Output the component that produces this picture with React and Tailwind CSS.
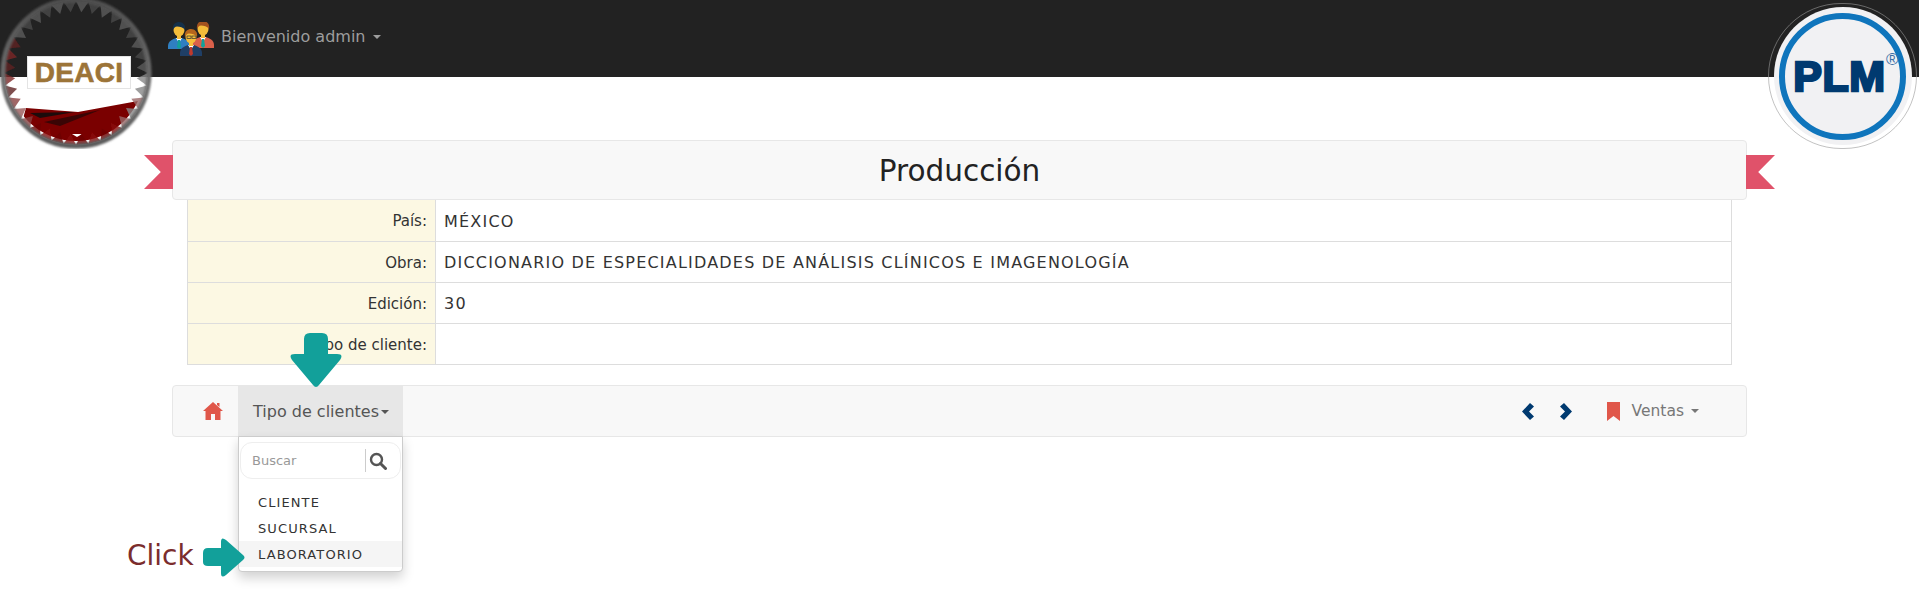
import React from 'react';

const rows = [
  { label: 'País:', value: 'MÉXICO' },
  { label: 'Obra:', value: 'DICCIONARIO DE ESPECIALIDADES DE ANÁLISIS CLÍNICOS E IMAGENOLOGÍA' },
  { label: 'Edición:', value: '30' },
  { label: 'Tipo de cliente:', value: '' },
];

// triangles of the DEACI ring, coloured by where they sit on the circle
const ringTeeth = (cx, cy, rOut, rIn, n) => {
  const teeth = [];
  for (let i = 0; i < n; i++) {
    const a0 = (i * 2 * Math.PI) / n;
    const a1 = ((i + 1) * 2 * Math.PI) / n;
    const mid = (a0 + a1) / 2;
    const deg = (mid * 180) / Math.PI;
    let fill = i % 2 ? '#5c5c5c' : '#4a4a4a';
    if (deg > 50 && deg < 130) fill = i % 2 ? '#8a0a0a' : '#6e0606';
    else if (deg >= 130 && deg < 160) fill = i % 2 ? '#8a4040' : '#9a5a5a';
    else if (deg >= 160 && deg < 215) fill = i % 2 ? '#7d2828' : '#5e2020';
    else if (deg >= 15 && deg <= 50) fill = i % 2 ? '#888' : '#9a6a6a';
    else if (deg < 15) fill = '#888';
    const p = (r, a) => `${(cx + r * Math.cos(a)).toFixed(1)},${(cy + r * Math.sin(a)).toFixed(1)}`;
    teeth.push({ key: i, fill, points: `${p(rOut, a0)} ${p(rIn, mid)} ${p(rOut, a1)}` });
  }
  return teeth;
};

const Caret = ({ className }) => (
  <span className={`inline-block w-0 h-0 border-x-[4px] border-x-transparent border-t-[4px] ${className}`} />
);

const DeaciLogo = () => (
  <div className="absolute left-0 top-0 w-[154px] h-[149px]">
    <svg viewBox="0 0 154 149" className="absolute inset-0 w-full h-full">
      <defs>
        <linearGradient id="ringFade" x1="0" y1="0" x2="0" y2="1">
          <stop offset="0" stopColor="#4f4f4f" />
          <stop offset="0.6" stopColor="#707070" />
          <stop offset="1" stopColor="#5a5a5a" />
        </linearGradient>
        <clipPath id="bandClip">
          <circle cx="76" cy="73" r="68" />
        </clipPath>
        <filter id="soft">
          <feGaussianBlur stdDeviation="1" />
        </filter>
        <filter id="softer">
          <feGaussianBlur stdDeviation="0.4" />
        </filter>
      </defs>
      <g clipPath="url(#bandClip)">
        <path d="M26 108 L78 112 L138 101 L140 150 L14 150 Z" fill="#7a0000" />
        <path d="M30 113 L75 112 L40 118 Z" fill="#1c0b0b" />
        <path d="M44 122 L100 110 L60 126 Z" fill="#3a0505" />
        <path d="M72 134 L82 134 L77 137 Z" fill="#fff" />
      </g>
      <g opacity="0.8" filter="url(#softer)">
        {ringTeeth(76, 73, 72, 61, 36).map((t) => (
          <polygon key={t.key} points={t.points} fill={t.fill} />
        ))}
      </g>
      <circle cx="76" cy="73" r="73" fill="none" stroke="url(#ringFade)" strokeWidth="5" filter="url(#soft)" />
    </svg>
    <div className="absolute left-[27px] top-[56px] w-[104px] h-[33px] bg-white border border-[#e4e4e4] flex items-center justify-center">
      <span className="font-['Liberation_Sans',sans-serif] font-bold text-[28px] leading-none tracking-[0.3px] text-[#9c7438] [-webkit-text-stroke:0.6px_#9c7438]">DEACI</span>
    </div>
  </div>
);

const PlmLogo = () => (
  <div className="absolute right-[2px] top-[3px] w-[149px] h-[146px] rounded-full border border-[#9a9a9a]/60 flex items-center justify-center">
    <div className="w-[138px] h-[138px] rounded-full bg-[#f1f1f3] flex items-center justify-center">
      <div className="w-[127px] h-[127px] rounded-full border-[6px] border-[#0f75bc] flex items-center justify-center">
        <span className="relative mr-[6px] font-['Liberation_Sans',sans-serif] font-bold text-[43px] leading-none tracking-[0.5px] text-[#003a70] [-webkit-text-stroke:2.5px_#003a70]">
          PLM
          <span className="absolute -right-[13px] -top-[4px] text-[17px] font-normal tracking-normal [-webkit-text-stroke:0] text-[#3a6ea5]">®</span>
        </span>
      </div>
    </div>
  </div>
);

const Person = ({ x, y, skin, hair, suit, tie }) => (
  <g transform={`translate(${x} ${y})`}>
    <path d="M0 24 C0 19 5 17 8 16 H14 C17 17 22 19 22 24 V27 H0 Z" fill={suit} />
    <path d="M8 16 L11 21 L14 16 Z" fill="#fff" />
    <path d="M10 18 H12 L13 25 L11 27 L9 25 Z" fill={tie} />
    <rect x="9" y="11" width="4" height="6" fill={skin} />
    <ellipse cx="11" cy="8" rx="5.500" ry="6.500" fill={skin} />
    <path d="M5 8 C4 2 8 0 11 0 C15 0 18 3 17 8 C15 5 12 4.500 9 4.500 C7 4.500 6 6 5 8 Z" fill={hair} />
  </g>
);

const PeopleIcon = () => (
  <svg viewBox="0 0 47 34" className="w-[47px] h-[34px] shrink-0">
    <Person x="0" y="0" skin="#f5bd3a" hair="#14304a" suit="#2f7fc1" tie="#12a09a" />
    <Person x="24" y="-1" skin="#f5bd3a" hair="#a2521f" suit="#d9604a" tie="#12a09a" />
    <Person x="12" y="7" skin="#f5bd3a" hair="#b5651d" suit="#1f3f66" tie="#c0392b" />
    <rect x="19" y="14" width="4" height="2.500" fill="none" stroke="#333" strokeWidth="0.7" />
    <rect x="24" y="14" width="4" height="2.500" fill="none" stroke="#333" strokeWidth="0.7" />
  </svg>
);

const DownArrow = () => (
  <svg viewBox="0 0 52 55" className="absolute left-[290px] top-[333px] w-[52px] h-[55px]">
    <path d="M20 0 H32 Q38 0 38 6 V21 H47 Q54 21 50 27 L29 52 Q26 56 23 52 L2 27 Q-2 21 5 21 H14 V6 Q14 0 20 0 Z" fill="#12a09a" />
  </svg>
);

const RightArrow = () => (
  <svg viewBox="0 0 42 39" className="absolute left-[203px] top-[538px] w-[42px] h-[39px]">
    <path d="M0 15 Q0 10 5 10 H18 V4 Q18 -2 23 2 L40 17 Q43 19.500 40 22 L23 37 Q18 41 18 35 V28 H5 Q0 28 0 24 Z" fill="#12a09a" />
  </svg>
);

const ribbon = 'w-[29px] h-[34px] bg-[#e0526a] shrink-0';

const App = () => {
  return (
    <div className="relative h-[593px] bg-white overflow-hidden font-['DejaVu_Sans',sans-serif] text-[#333]">
      {/* Navbar */}
      <div className="h-[77px] bg-[#222] flex items-start pl-[168px] pt-[22px] gap-[6px]">
        <PeopleIcon />
        <span className="text-[#9d9d9d] text-[16px] leading-[30px]">Bienvenido admin</span>
        <Caret className="border-t-[#9d9d9d] mt-[13px] ml-[2px]" />
      </div>

      <div className="w-[1575px] ml-[172px]">
        {/* Title */}
        <div className="relative mt-[63px] h-[60px] pt-[3px] bg-[#f8f8f8] border border-[#e7e7e7] rounded flex items-center justify-center">
          <div className={`absolute -left-[29px] top-[14px] ${ribbon} [clip-path:polygon(0_0,100%_0,100%_100%,0_100%,58%_50%)]`} />
          <div className={`absolute -right-[29px] top-[14px] ${ribbon} [clip-path:polygon(0_0,100%_0,42%_50%,100%_100%,0_100%)]`} />
          <h1 className="text-[29.5px] text-[#222] leading-none">Producción</h1>
        </div>

        {/* Info table */}
        <div className="mx-[15px] border border-[#ddd] border-t-0">
          {rows.map((r) => (
            <div key={r.label} className="flex h-[41px] border-t border-[#ddd] first:border-t-0">
              <div className="w-[248px] shrink-0 bg-[#fcf8e3] border-r border-[#ddd] flex items-center justify-end pr-[8px] pt-[2px] text-[15px]">{r.label}</div>
              <div className="flex-1 flex items-center pl-[8px] pt-[2px] text-[16px] tracking-[1.2px]">{r.value}</div>
            </div>
          ))}
        </div>

        {/* Toolbar */}
        <div className="mt-[20px] h-[52px] bg-[#f8f8f8] border border-[#e7e7e7] rounded flex items-stretch">
          <div className="w-[65px] flex items-center justify-center pl-[15px]">
            <svg viewBox="0 0 20 18" className="w-[20px] h-[18px]">
              <path d="M10 0 L20 9 L17.500 9 V18 H12 V12 H8 V18 H2.500 V9 H0 Z M14 1 H16.500 V5 L14 3 Z" fill="#e0574a" />
            </svg>
          </div>
          <div className="w-[165px] bg-[#e7e7e7] flex items-center pl-[15px] pt-[2px] text-[#555] text-[16px]">
            Tipo de clientes
            <Caret className="border-t-[#555] ml-[2px]" />
          </div>
          <div className="ml-auto flex items-center pr-[47px]">
            <svg viewBox="0 0 12 17" className="w-[12px] h-[17px]">
              <path d="M8 0 L12 3.500 L7 8.500 L12 13.500 L8 17 L0 8.500 Z" fill="#003a70" />
            </svg>
            <svg viewBox="0 0 12 17" className="w-[12px] h-[17px] ml-[26px]">
              <path d="M4 0 L0 3.500 L5 8.500 L0 13.500 L4 17 L12 8.500 Z" fill="#003a70" />
            </svg>
            <svg viewBox="0 0 13 19" className="w-[13px] h-[19px] ml-[35px]">
              <path d="M0 0 H13 V19 L6.500 14 L0 19 Z" fill="#e0574a" />
            </svg>
            <span className="ml-[12px] pt-[2px] text-[#777] text-[15.5px]">Ventas</span>
            <Caret className="border-t-[#777] ml-[7px]" />
          </div>
        </div>
      </div>

      {/* Dropdown */}
      <div className="absolute left-[238px] top-[436px] w-[165px] h-[136px] bg-white border border-[#ccc] rounded-b shadow-[0_6px_12px_rgba(0,0,0,0.18)]">
        <div className="mx-[1px] mt-[5px] h-[37px] border border-[#eee] rounded-[12px] flex items-center pl-[11px]">
          <span className="w-[113px] text-[13px] text-[#999]">Buscar</span>
          <div className="h-[23px] w-px bg-[#ccc]" />
          <svg viewBox="0 0 18 18" className="w-[18px] h-[18px] ml-[3px]">
            <circle cx="7.500" cy="7.500" r="5.500" fill="none" stroke="#555" strokeWidth="2.400" />
            <path d="M11.500 11.500 L16.500 16.500" stroke="#555" strokeWidth="3" strokeLinecap="round" />
          </svg>
        </div>
        <ul className="mt-[10px] text-[13px] tracking-[1.1px] text-[#333]">
          <li className="h-[26px] pl-[19px] pt-[2px] flex items-center">CLIENTE</li>
          <li className="h-[26px] pl-[19px] pt-[2px] flex items-center">SUCURSAL</li>
          <li className="h-[26px] pl-[19px] pt-[2px] flex items-center bg-[#f5f5f5]">LABORATORIO</li>
        </ul>
      </div>

      <DeaciLogo />
      <PlmLogo />
      <DownArrow />
      <RightArrow />
      <span className="absolute left-[127px] top-[537px] text-[28px] leading-[38px] text-[#7b2d2d]">Click</span>
    </div>
  );
};

export default App;
